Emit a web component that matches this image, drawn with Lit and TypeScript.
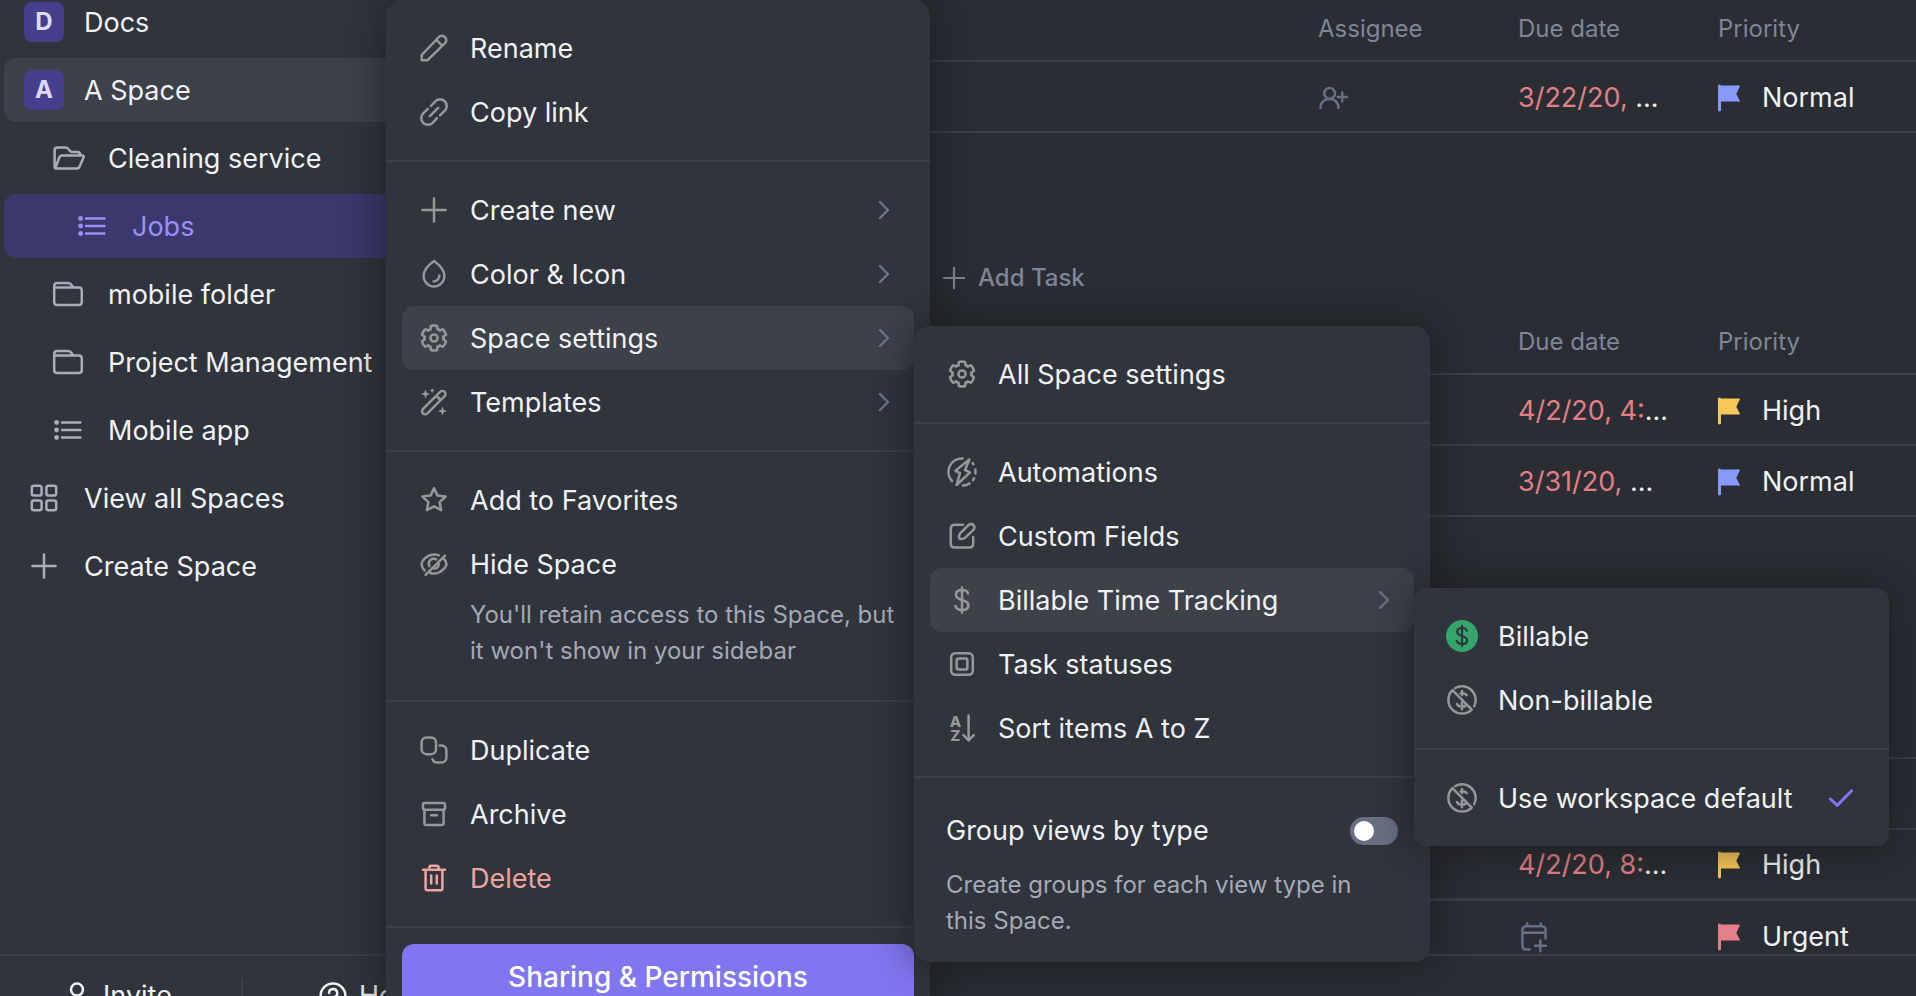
import { LitElement, html, svg, css, nothing, type TemplateResult, type SVGTemplateResult } from "lit";
import { customElement, state } from "lit/decorators.js";
import { classMap } from "lit/directives/class-map.js";

/* Outline of a six-toothed gear centred on the origin. */
const gearOutline = (() => {
  const at = (r: number, deg: number) => {
    const a = (deg * Math.PI) / 180;
    return `${(r * Math.sin(a)).toFixed(2)} ${(-r * Math.cos(a)).toFixed(2)}`;
  };
  let d = "";
  for (let i = 0; i < 6; i++) {
    const c = i * 60;
    d += `${i === 0 ? "M" : "L"}${at(9.2, c - 22)}L${at(12.4, c - 15)}Q${at(13, c)} ${at(12.4, c + 15)}L${at(9.2, c + 22)}Q${at(10.6, c + 30)} ${at(9.2, c + 38)}`;
  }
  return d + "Z";
})();

const dollar = svg`<path d="M6-6.5C5.5-9 3-10 0-10C-3.6-10-6-8.2-6-5.3C-6-2.2-3.2-1 0 0C4 1.1 6.4 2.3 6.4 5.2C6.4 8.2 3.8 10 0 10C-3.4 10-6 8.6-6.6 6M0-12.6V12.6"/>`;
const noDollar = svg`<path d="M-7-11.8A13.7 13.7 0 0 1 12.2 6.2M9.8 9.6A13.7 13.7 0 0 1-9.6-9.8M-9.6-9.8L9.8 9.6M4.6-4.8C3.8-6.2 2-6.8 0-6.8L-1.4-6.6M0-9V-5M0 2.5V9.2M-5 4C-4.2 6-2.4 6.8 0 6.8C1.6 6.8 3 6.4 3.8 5.4"/>`;

const ICONS: Record<string, SVGTemplateResult> = {
  pencil: svg`<path d="M-12.3 12.3V7L4.8-10.9A4.3 4.3 0 0 1 11-10.9A4.3 4.3 0 0 1 11-4.8L-6.6 12.3ZM2.4-8.2L8.3-2.2"/>`,
  link: svg`<path d="M-3.2-6L1.4-10.7A6.6 6.6 0 0 1 10.8-1.4L6 3.4M-6.2-3.2L-10.8 1.4A6.6 6.6 0 0 0-1.4 10.8L3 6.2M-4.2 4.2L4.2-4.2"/>`,
  plus: svg`<path d="M0-11.6V11.6M-11.6 0H11.6"/>`,
  drop: svg`<path d="M0-13C4.2-10 10.4-4.6 10.4 2A10.4 10.4 0 0 1-10.4 2C-10.4-4.6-4.2-10 0-13ZM5.4 1.6A6 6 0 0 1-.4 7.4"/>`,
  gear: svg`<path d=${gearOutline}/><circle r="3.6"/>`,
  wand: svg`<path d="M-11 7L6.2-10.2A3 3 0 0 1 10.6-5.8L-6.6 11.4A3 3 0 0 1-11 7ZM2.4-6.2L6.6-2"/><path class="solid" d="M-8.5-12.5L-7.2-9.3L-4-8L-7.2-6.7L-8.5-3.5L-9.8-6.7L-13-8L-9.8-9.3ZM8.5 4.5L9.8 7.7L13 9L9.8 10.3L8.5 13.5L7.2 10.3L4 9L7.2 7.7ZM-1.8-14L-1-12.2L.8-11.5L-1-10.8L-1.8-9L-2.6-10.8L-4.4-11.5L-2.6-12.2Z"/>`,
  star: svg`<path d="M0-11.8L3.5-4.4L11.6-3.4L5.6 2.2L7.2 10.2L0 6.3L-7.2 10.2L-5.6 2.2L-11.6-3.4L-3.5-4.4Z"/>`,
  eyeOff: svg`<path d="M-9.4 6.4C-11.2 4.6-12.4 2.2-12.4 0C-12.4-3-7-9.6 0-9.6C1.8-9.6 3.4-9.2 4.8-8.6M9.8-5.4C11.4-3.6 12.4-1.4 12.4 0C12.4 3 7 9.6 0 9.6C-1.2 9.6-2.4 9.4-3.6 9M-8.4 10.8L11-8.4M-4.6 2.2A5 5 0 0 1 2.2-4.6M4.8 0A5 5 0 0 1 .6 4.8"/>`,
  duplicate: svg`<rect x="-12.4" y="-12.6" width="14.4" height="16.8" rx="5"/><path d="M5.6-4.6H7.4A5 5 0 0 1 12.4 .4V7.6A5 5 0 0 1 7.4 12.6H3A5 5 0 0 1-1.6 9.2"/>`,
  archive: svg`<rect x="-11" y="-11" width="22" height="6.8" rx="1.5"/><path d="M-9.6-4.2V9.2Q-9.6 11-7.8 11H7.8Q9.6 11 9.6 9.2V-4.2M-3 1.2H3"/>`,
  trash: svg`<path d="M-11-8.2H11M-8.4-8.2V10.4Q-8.4 12.2-6.6 12.2H6.6Q8.4 12.2 8.4 10.4V-8.2M-4.6-8.6V-10.4Q-4.6-12.2-2.8-12.2H2.8Q4.6-12.2 4.6-10.4V-8.6M-2.8-2.4V5.4M2.8-2.4V5.4"/>`,
  bolt: svg`<path d="M.6-13.6A13.6 13.6 0 0 0-10 9.2M10.6-9L11.4-7.8M13.4-2.6V1.4M12.2 6L11 8.2M1 13.6A13.6 13.6 0 0 0 7.6 11.4M7.4-12.6L-6.6-1.2L-2 1.2L-5.4 13L8 .4L3-2Z"/>`,
  edit: svg`<path d="M1-11.2H-7.2Q-11.2-11.2-11.2-7.2V7.4Q-11.2 11.4-7.2 11.4H7.2Q11.2 11.4 11.2 7.4V1M-2.6 2.6C-3.6 .4-3-1.6-1.4-3.2L6.6-11A3.2 3.2 0 0 1 11.4-6.2L3.2 1.6C1.4 3.2-.6 3.4-2.6 2.6Z"/>`,
  dollar,
  status: svg`<rect x="-10.8" y="-10.8" width="21.6" height="21.6" rx="4"/><rect x="-5.4" y="-5.4" width="10.8" height="10.8" rx="2"/>`,
  sort: svg`<path d="M6.6-12.6V12M1.4 7.2L6.6 12.4L11.8 7.2"/><text x="-6.6" y="-1" text-anchor="middle">A</text><text x="-6.6" y="13" text-anchor="middle">Z</text>`,
  billable: svg`<circle class="coin" r="16"/><g class="coin-mark" transform="scale(.8)">${dollar}</g>`,
  nonBillable: noDollar,
  check: svg`<path class="tick" d="M-10.6 1L-3.8 7.4L10.6-7.2"/>`,
  folderOpen: svg`<path d="M-13.4 8.4V-7.6Q-13.4-10.4-10.6-10.4H-2.6Q-.8-10.4 .4-9L2.2-6.8Q3-6 4.4-6H9.4Q12.2-6 12.2-3.2V-2.4M-12.6 10L-8.8-.2Q-8-2.4-5.6-2.4H14.2Q16.4-2.4 15.4-.2L11.6 8.4Q10.6 10.6 8.4 10.6H-11.2Q-13.4 10.6-13.4 8.4"/>`,
  folder: svg`<path d="M-13.8 8V-8Q-13.8-11-10.8-11H0Q1.8-11 3-9.6L4.6-7.4Q5.4-6.6 6.8-6.6H10.8Q13.8-6.6 13.8-3.6V8Q13.8 11 10.8 11H-10.8Q-13.8 11-13.8 8ZM-13.8-6.6H6"/>`,
  list: svg`<path d="M-6-7.5H12.4M-6 0H12.4M-6 7.5H12.4"/><g class="solid"><circle cx="-11.4" cy="-7.5" r="2.4"/><circle cx="-11.4" r="2.4"/><circle cx="-11.4" cy="7.5" r="2.4"/></g>`,
  grid: svg`<rect x="-12.2" y="-12.2" width="9.8" height="9.8" rx="2"/><rect x="2.4" y="-12.2" width="9.8" height="9.8" rx="2"/><rect x="-12.2" y="2.4" width="9.8" height="9.8" rx="2"/><rect x="2.4" y="2.4" width="9.8" height="9.8" rx="2"/>`,
  dots: svg`<g class="solid"><circle cx="-8" r="2.7"/><circle r="2.7"/><circle cx="8" r="2.7"/></g>`,
  person: svg`<circle cy="-6.4" r="6"/><path d="M-7.4 13V9A7.4 7.4 0 0 1 7.4 9V13"/>`,
  help: svg`<circle r="12.4"/><path d="M-4-3A4.1 4.1 0 1 1 1.6 1Q0 1.8 0 4M0 7.2V7.6"/>`,
  userPlus: svg`<circle cx="-4.4" cy="-4.6" r="5.4"/><path d="M-13.4 10C-13.4 4-9.4 1-4.4 1C.6 1 4.4 4 4.4 10M8.2-5.4V3.4M3.8-1H13"/>`,
  calendarPlus: svg`<path d="M-4.4 12.4H-7.6Q-11.6 12.4-11.6 8.4V-6.8Q-11.6-10.8-7.6-10.8H7.6Q11.6-10.8 11.6-6.8V1.4M-11.6-4.2H11.6M-6.8-13.4V-11M6.8-13.4V-11M6.4 3.4V14.2M1 8.8H11.8"/>`,
};

const icon = (name: string, cls = "") =>
  html`<svg class="icon ${cls}" viewBox="-16 -16 32 32" aria-hidden="true">${ICONS[name]}</svg>`;

const chevron = html`<svg class="chevron" viewBox="0 0 12 20" aria-hidden="true"><path d="M2 2L10 10L2 18" /></svg>`;

interface NavRow {
  label: string;
  level: number;
  icon?: string;
  initial?: string;
  look?: "hover" | "current";
  more?: boolean;
}

const NAV: NavRow[] = [
  { label: "Docs", level: 0, initial: "D" },
  { label: "A Space", level: 0, initial: "A", look: "hover", more: true },
  { label: "Cleaning service", level: 1, icon: "folderOpen", more: true },
  { label: "Jobs", level: 2, icon: "list", look: "current" },
  { label: "mobile folder", level: 1, icon: "folder" },
  { label: "Project Management", level: 1, icon: "folder" },
  { label: "Mobile app", level: 1, icon: "list" },
  { label: "View all Spaces", level: 0, icon: "grid" },
  { label: "Create Space", level: 0, icon: "plus" },
];

interface Task {
  due?: string;
  priority?: "Normal" | "High" | "Urgent";
  assign?: boolean;
  strong?: boolean;
}

interface Group {
  columns: string[];
  tasks: Task[];
  add?: boolean;
}

const GROUPS: Group[] = [
  { columns: ["Assignee", "Due date", "Priority"], tasks: [{ due: "3/22/20, ", priority: "Normal", assign: true }], add: true },
  { columns: ["", "Due date", "Priority"], tasks: [{ due: "4/2/20, 4:", priority: "High" }, { due: "3/31/20, ", priority: "Normal" }] },
  { columns: ["", "", ""], tasks: [{}, { due: "4/2/20, 8:", priority: "High", strong: true }, { priority: "Urgent" }] },
];

@customElement("app-root")
export class AppRoot extends LitElement {
  @state() private grouped = false;

  static styles = css`
    :host {
      display: block;
      position: relative;
      height: 100vh;
      overflow: hidden;
      background: #2a2d34;
      color: #f0f1f3;
      font: 400 27px/36px Inter, "Liberation Sans", sans-serif;
    }
    * { box-sizing: border-box; }
    ul { list-style: none; margin: 0; padding: 0; }
    button { font: inherit; color: inherit; background: none; border: 0; padding: 0; text-align: left; cursor: pointer; }
    a { color: inherit; text-decoration: none; }
    p { margin: 0; }

    .icon { flex: none; width: 32px; height: 32px; fill: none; stroke: currentColor; stroke-width: 2.5; stroke-linecap: round; stroke-linejoin: round; overflow: visible; }
    .icon .solid { fill: currentColor; stroke: none; }
    .icon text { fill: currentColor; stroke: none; font: 800 15px Inter, sans-serif; }
    .icon .coin { fill: #33a56d; stroke: none; }
    .icon .coin-mark { stroke: #2b3a38; stroke-width: 2.8; }
    .icon .tick { stroke: #8277f3; stroke-width: 3; }

    .layout { display: grid; grid-template-columns: 484px minmax(0, 1fr); height: 100%; }

    .sidebar { display: flex; flex-direction: column; min-height: 0; background: #30343c; }
    .nav { flex: 1; min-height: 0; overflow: hidden; }
    .nav-list { display: flex; flex-direction: column; gap: 4px; margin-top: -10px; padding: 0 4px; }
    .nav-row { display: flex; align-items: center; height: 64px; padding: 0 12px 0 20px; border-radius: 12px; }
    .level-1 { padding: 0 16px 0 44px; }
    .level-2 { padding-left: 68px; }
    .hover { background: #3d4149; }
    .current { background: #3b386d; color: #9b90f8; }
    .nav-link { display: flex; align-items: center; gap: 20px; flex: 1; white-space: nowrap; }
    .nav-mark { display: flex; justify-content: center; align-items: center; width: 40px; height: 40px; color: #a9adba; }
    .nav-label, .item-label { padding-top: 2px; }
    .current .nav-mark { color: inherit; }
    .avatar { border-radius: 8px; background: #463f8c; color: #dedafe; font-size: 24px; font-weight: 700; }
    .actions { display: flex; gap: 16px; color: #878d9b; }
    .actions button { display: flex; }

    .footer { display: grid; grid-template-columns: 1fr 2px 1fr; column-gap: 8px; align-items: start; height: 42px; border-top: 2px solid #3b3f48; }
    .footer-link { display: flex; align-items: center; justify-content: center; gap: 10px; padding-top: 22px; }
    .footer-rule { background: #3b3f48; height: 60px; margin-top: 22px; }

    .main { display: flex; flex-direction: column; min-width: 0; min-height: 0; }
    .groups { flex: 1; min-height: 0; overflow: hidden; }
    .bottom-bar { height: 42px; border-top: 2px solid #3b3f48; }
    .tasks { width: 100%; table-layout: fixed; border-collapse: separate; border-spacing: 0; }
    .col-side { width: 200px; }
    .col-last { width: 198px; }
    .tasks th { height: 62px; padding: 0 0 2px; border-bottom: 2px solid #3b3f48; color: #7f8696; font-size: 24px; font-weight: 400; text-align: left; }
    .tasks td { height: 71px; padding: 2px 0 0; border-bottom: 2px solid #3b3f48; white-space: nowrap; }
    .strong td { border-bottom-width: 3px; }
    .due { color: #e37f84; }
    .muted { display: flex; color: #667085; }
    .priority { display: flex; align-items: center; gap: 22px; }
    .flag { width: 22px; height: 28px; }
    .flag-normal { fill: #859af9; }
    .flag-high { fill: #f9c859; }
    .flag-urgent { fill: #e37f87; }
    .group-gap { height: 178px; padding: 127px 0 0 456px; }
    .tasks + .group-gap { height: 180px; }
    .add-task { display: flex; align-items: center; gap: 10px; color: #7f8696; font-size: 24px; font-weight: 500; }
    .add-task .icon { width: 28px; height: 28px; }

    .menu { position: absolute; border-radius: 16px; background: #30343c; box-shadow: 0 0 40px rgba(20, 20, 20, 0.62); }
    .space-menu { top: 0; left: 386px; width: 544px; }
    .submenu { top: 20px; left: 100%; z-index: 1; }
    .settings-menu { width: 516px; }
    .billing-menu { width: 475px; border-radius: 12px; }
    .section { padding: 16px; }
    .section + .section { border-top: 2px solid #3b3f48; }
    .anchor { position: relative; }
    .item { display: flex; align-items: center; gap: 20px; width: 100%; height: 64px; padding: 0 24px 0 16px; border-radius: 12px; white-space: nowrap; }
    .item .icon { color: #979797; }
    .open { background: #3d4149; }
    .item-label { flex: 1; }
    .chevron { width: 12px; height: 20px; fill: none; stroke: #6a7689; stroke-width: 2.4; stroke-linecap: round; stroke-linejoin: round; }
    .danger, .item.danger .icon { color: #efa59e; }
    .billing-menu .item { padding-right: 16px; }
    .note { color: #a5a9b5; font-size: 24px; line-height: 36px; }
    .item-note { padding: 1px 0 15px 68px; }
    .group-section { padding: 35px 32px 23px; }
    .toggle-row { display: flex; align-items: center; justify-content: space-between; height: 36px; margin-bottom: 18px; }
    .toggle { appearance: none; flex: none; width: 48px; height: 28px; margin: 0; padding: 4px; border-radius: 14px; background: #667082; cursor: pointer; }
    .toggle::before { content: ""; display: block; width: 20px; height: 20px; border-radius: 50%; background: #fff; }
    .toggle:checked { background: #8277f3; }
    .toggle:checked::before { margin-left: 20px; }
    .share { display: block; width: 100%; height: 64px; padding-top: 2px; border-radius: 12px; background: #8176f1; color: #fff; font-size: 28px; font-weight: 500; text-align: center; }
  `;

  private navRow(row: NavRow) {
    return html`<li class=${classMap({ "nav-row": true, [`level-${row.level}`]: true, hover: row.look === "hover", current: row.look === "current" })}>
      <a class="nav-link" href="#">
        ${row.initial ? html`<span class="nav-mark avatar">${row.initial}</span>` : html`<span class="nav-mark">${icon(row.icon!)}</span>`}
        <span class="nav-label">${row.label}</span>
      </a>
      ${row.more
        ? html`<span class="actions">
            <button type="button" aria-label="More">${icon("dots")}</button>
            <button type="button" aria-label="Add">${icon("plus")}</button>
          </span>`
        : nothing}
    </li>`;
  }

  private item(name: string, label: string, opts: { submenu?: TemplateResult; arrow?: boolean; danger?: boolean; checked?: boolean } = {}) {
    return html`<li class="anchor">
      <button type="button" class=${classMap({ item: true, open: !!opts.submenu, danger: !!opts.danger })}>
        ${icon(name)}<span class="item-label">${label}</span>
        ${opts.arrow || opts.submenu ? chevron : nothing}${opts.checked ? icon("check") : nothing}
      </button>
      ${opts.submenu ?? nothing}
    </li>`;
  }

  private billingMenu() {
    return html`<div class="menu submenu billing-menu">
      <ul class="section">${this.item("billable", "Billable")}${this.item("nonBillable", "Non-billable")}</ul>
      <ul class="section">${this.item("nonBillable", "Use workspace default", { checked: true })}</ul>
    </div>`;
  }

  private settingsMenu() {
    return html`<div class="menu submenu settings-menu">
      <ul class="section">${this.item("gear", "All Space settings")}</ul>
      <ul class="section">
        ${this.item("bolt", "Automations")}
        ${this.item("edit", "Custom Fields")}
        ${this.item("dollar", "Billable Time Tracking", { submenu: this.billingMenu() })}
        ${this.item("status", "Task statuses")}
        ${this.item("sort", "Sort items A to Z")}
      </ul>
      <div class="section group-section">
        <div class="toggle-row">
          <label for="group-views">Group views by type</label>
          <input id="group-views" class="toggle" type="checkbox" role="switch" .checked=${this.grouped}
            @change=${(e: Event) => (this.grouped = (e.target as HTMLInputElement).checked)} />
        </div>
        <p class="note">Create groups for each view type in this Space.</p>
      </div>
    </div>`;
  }

  private spaceMenu() {
    return html`<div class="menu space-menu">
      <ul class="section">${this.item("pencil", "Rename")}${this.item("link", "Copy link")}</ul>
      <ul class="section">
        ${this.item("plus", "Create new", { arrow: true })}
        ${this.item("drop", "Color & Icon", { arrow: true })}
        ${this.item("gear", "Space settings", { submenu: this.settingsMenu() })}
        ${this.item("wand", "Templates", { arrow: true })}
      </ul>
      <ul class="section">
        ${this.item("star", "Add to Favorites")}
        ${this.item("eyeOff", "Hide Space")}
        <li class="note item-note">You'll retain access to this Space, but it won't show in your sidebar</li>
      </ul>
      <ul class="section">
        ${this.item("duplicate", "Duplicate")}${this.item("archive", "Archive")}${this.item("trash", "Delete", { danger: true })}
      </ul>
      <div class="section"><button type="button" class="share">Sharing &amp; Permissions</button></div>
    </div>`;
  }

  private taskRow(task: Task) {
    return html`<tr class=${classMap({ strong: !!task.strong })}>
      <td></td>
      <td>${task.assign ? html`<span class="muted">${icon("userPlus")}</span>` : nothing}</td>
      <td>
        ${task.due
          ? html`<span class="due">${task.due}</span>...`
          : task.priority ? html`<span class="muted">${icon("calendarPlus")}</span>` : nothing}
      </td>
      <td>
        ${task.priority
          ? html`<span class="priority">
              <svg class="flag flag-${task.priority.toLowerCase()}" viewBox="0 0 22 28" aria-hidden="true">
                <path d="M0 1.5Q1.5-.5 3 1.5H21Q22.3 1.5 21.8 2.6L18.6 9.2Q18.4 9.8 18.6 10.4L21.8 16.4Q22.3 17.5 21 17.5H3V26.5Q1.5 28.5 0 26.5Z" />
              </svg>${task.priority}</span>`
          : nothing}
      </td>
    </tr>`;
  }

  private group(g: Group, last: boolean) {
    return html`<table class="tasks">
        <colgroup><col /><col class="col-side" /><col class="col-side" /><col class="col-last" /></colgroup>
        <thead><tr><th></th>${g.columns.map((c) => html`<th scope="col">${c}</th>`)}</tr></thead>
        <tbody>${g.tasks.map((t) => this.taskRow(t))}</tbody>
      </table>
      ${last ? nothing : html`<div class="group-gap">
        ${g.add ? html`<button type="button" class="add-task">${icon("plus")}Add Task</button>` : nothing}
      </div>`}`;
  }

  render() {
    return html`<div class="layout">
        <aside class="sidebar">
          <nav class="nav"><ul class="nav-list">${NAV.map((r) => this.navRow(r))}</ul></nav>
          <div class="footer">
            <a class="footer-link" href="#">${icon("person")}<span>Invite</span></a>
            <span class="footer-rule"></span>
            <a class="footer-link" href="#">${icon("help")}<span>Help</span></a>
          </div>
        </aside>
        <main class="main">
          <div class="groups">${GROUPS.map((g, i) => this.group(g, i === GROUPS.length - 1))}</div>
          <div class="bottom-bar"></div>
        </main>
      </div>
      ${this.spaceMenu()}`;
  }
}
